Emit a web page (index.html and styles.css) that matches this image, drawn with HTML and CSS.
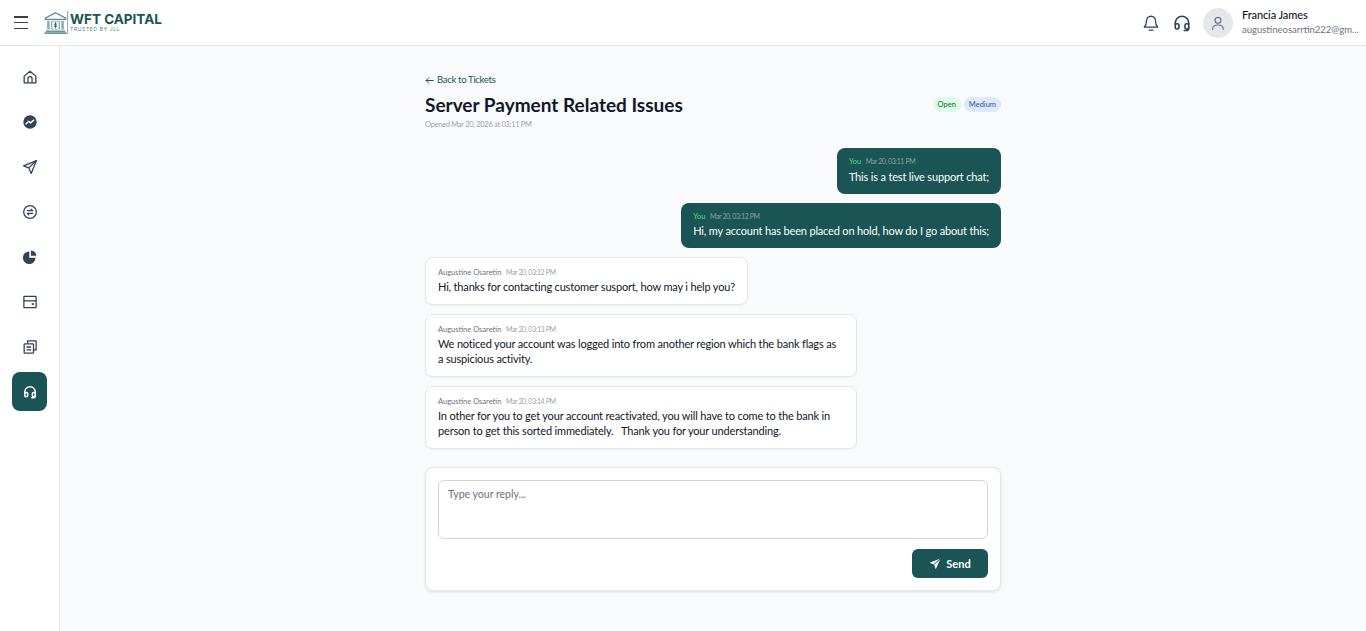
FILE: index.html
```html
<!DOCTYPE html>
<html lang="en">
<head>
<meta charset="utf-8">
<title>Server Payment Related Issues</title>
<link rel="stylesheet" href="styles.css">
</head>
<body>
<header class="topbar">
  <div class="brand-group">
    <button class="menu-btn" aria-label="Menu"><span></span><span></span><span></span></button>
    <div class="logo">
      <svg class="logo-mark" width="23" height="23" viewBox="0 0 26 26" fill="none"><path d="M1.500 8 13 2l11.500 6v1.500h-23z" fill="#fff" stroke="#5f8f8c" stroke-width="1.500"/><path d="M3.500 11h3v10h-3zM8 11h10v10H8zM19.500 11h3v10h-3z" fill="#8fb0ad"/><path d="M9.500 12h7v8h-7z" fill="#fff"/><path d="M13 12.500v7" stroke="#2f6662"/><path d="M11.500 14h3v1.500h-3zM11.500 16.500h3V18h-3z" fill="#2f6662"/><path d="M2 22h22v1.700H2zM.5 24h25v2H.5z" fill="#6c9794"/></svg>
      <div class="logo-rule"></div>
      <div class="logo-text">
        <div class="logo-name">WFT CAPITAL</div>
        <div class="logo-sub">TRUSTED BY JLL</div>
      </div>
    </div>
  </div>
  <div class="top-actions">
    <svg class="top-icon bell" width="18" height="18" viewBox="0 0 24 24" fill="none" stroke="#334155" stroke-width="1.700" stroke-linecap="round" stroke-linejoin="round"><path d="M6 9a6 6 0 0 1 12 0c0 5 1.500 7 3 8.500H3C4.500 16 6 14 6 9z"/><path d="M9.500 21.500h5"/></svg>
    <svg class="top-icon" width="18" height="18" viewBox="0 0 24 24" fill="none" stroke="#334155" stroke-width="2.200" stroke-linecap="round" stroke-linejoin="round"><path d="M3 14v-2a9 9 0 0 1 18 0v2"/><rect x="3" y="13" width="5" height="7" rx="2"/><rect x="16" y="13" width="5" height="7" rx="2"/><path d="M21 18v1a3 3 0 0 1-3 3h-3"/></svg>
    <div class="avatar">
      <svg width="16" height="16" viewBox="0 0 24 24" fill="none" stroke="#6b7280" stroke-width="1.800" stroke-linecap="round"><circle cx="12" cy="8" r="4.500"/><path d="M4 21.500c0-4.500 3.500-6.500 8-6.500s8 2 8 6.500"/></svg>
    </div>
    <div class="user">
      <div class="user-name">Francia James</div>
      <div class="user-mail">augustineosarrtin222@gm...</div>
    </div>
  </div>
</header>
<div class="shell">
  <nav class="sidebar">
    <a class="nav-item"><svg width="14" height="14" viewBox="0 0 24 24" fill="none" stroke="#334155" stroke-width="2.200" stroke-linejoin="round"><path d="M2 10.500 12 2l10 8.500V22H2z"/><path d="M8.500 22v-7a3.500 3.500 0 0 1 7 0v7"/></svg></a>
    <a class="nav-item"><svg width="14" height="14" viewBox="0 0 24 24"><circle cx="12" cy="12" r="11.500" fill="#334155"/><path d="M4.500 16 9.500 11l3.500 2.500L19 8" fill="none" stroke="#fff" stroke-width="2.500" stroke-linejoin="round"/></svg></a>
    <a class="nav-item"><svg width="14" height="14" viewBox="0 0 24 24" fill="none" stroke="#334155" stroke-width="2.200" stroke-linejoin="round"><path d="M23 1 1 10l9 3.500L14 23z"/><path d="M23 1 10 13.500"/></svg></a>
    <a class="nav-item"><svg width="14" height="14" viewBox="0 0 24 24" fill="none" stroke="#334155" stroke-width="2.200" stroke-linecap="round" stroke-linejoin="round"><circle cx="12" cy="12" r="10.800"/><path d="M7.500 9.500h9l-2.500-2.500M16.500 14.500h-9l2.500 2.500"/></svg></a>
    <a class="nav-item"><svg width="14" height="14" viewBox="0 0 24 24" fill="#334155"><path d="M10.800 2.500a10.800 10.800 0 1 0 10.700 10.700H10.800z"/><path d="M13.500 1v8.800h9.400A10 10 0 0 0 13.500 1z"/></svg></a>
    <a class="nav-item"><svg width="14" height="14" viewBox="0 0 24 24" fill="none" stroke="#334155" stroke-width="2.200"><rect x="1.500" y="2.500" width="21" height="19" rx="1"/><path d="M1.500 10h21"/><path d="M15 15.500h4" stroke-width="2.800"/></svg></a>
    <a class="nav-item"><svg width="14" height="14" viewBox="0 0 24 24" fill="none" stroke="#334155" stroke-width="2.200" stroke-linejoin="round"><path d="M8 6V1.500h14.500V17H18"/><rect x="2" y="6.500" width="16" height="16" rx="1"/><path d="M6 12h8M6 17h8"/></svg></a>
    <a class="nav-item active"><svg width="14" height="14" viewBox="0 0 24 24" fill="none" stroke="#fff" stroke-width="2.600" stroke-linecap="round" stroke-linejoin="round"><path d="M3 14v-2a9 9 0 0 1 18 0v2"/><rect x="3" y="13" width="5" height="7" rx="2"/><rect x="16" y="13" width="5" height="7" rx="2"/><path d="M21 18v1a3 3 0 0 1-3 3h-3"/></svg></a>
  </nav>
  <main class="main">
    <div class="column">
      <a class="back"><svg width="9" height="9" viewBox="0 0 12 12" fill="none" stroke="#1a5454" stroke-width="1.300" stroke-linecap="round" stroke-linejoin="round"><path d="M11 6H1.500M5 2.500 1.500 6 5 9.500"/></svg>Back to Tickets</a>
      <div class="ticket-head">
        <div>
          <h1 class="title">Server Payment Related Issues</h1>
          <div class="opened">Opened Mar 20, 2026 at 03:11 PM</div>
        </div>
        <div class="badges"><span class="badge badge-open">Open</span><span class="badge badge-medium">Medium</span></div>
      </div>
      <div class="thread">
        <div class="msg msg-out">
          <div class="meta"><span class="who">You</span><span class="when">Mar 20, 03:11 PM</span></div>
          <div class="body">This is a test live support chat;</div>
        </div>
        <div class="msg msg-out">
          <div class="meta"><span class="who">You</span><span class="when">Mar 20, 03:12 PM</span></div>
          <div class="body">Hi, my account has been placed on hold, how do I go about this;</div>
        </div>
        <div class="msg msg-in">
          <div class="meta"><span class="who">Augustine Osaretin</span><span class="when">Mar 20, 03:12 PM</span></div>
          <div class="body">Hi, thanks for contacting customer susport, how may i help you?</div>
        </div>
        <div class="msg msg-in msg-wide">
          <div class="meta"><span class="who">Augustine Osaretin</span><span class="when">Mar 20, 03:13 PM</span></div>
          <div class="body">We noticed your account was logged into from another region which the bank flags as a suspicious activity.</div>
        </div>
        <div class="msg msg-in msg-wide">
          <div class="meta"><span class="who">Augustine Osaretin</span><span class="when">Mar 20, 03:14 PM</span></div>
          <div class="body">In other for you to get your account reactivated, you will have to come to the bank in person to get this sorted immediately. &nbsp; Thank you for your understanding.</div>
        </div>
      </div>
      <form class="reply">
        <textarea class="reply-input" placeholder="Type your reply..."></textarea>
        <div class="reply-actions">
          <button class="send" type="button"><svg width="12" height="12" viewBox="0 0 24 24"><path d="M23 1 1 9.500l9 3.500 3.500 9.500z" fill="#fff"/><path d="M23 1 10 13" stroke="#1a5454" stroke-width="2"/></svg>Send</button>
        </div>
      </form>
    </div>
  </main>
</div>
</body>
</html>
```
FILE: styles.css
```css
* { box-sizing: border-box; }
html, body { height: 100%; }
body {
  margin: 0;
  background: #f9fafb;
  color: #111827;
  font-family: Lato, "Noto Sans", sans-serif;
  overflow: hidden;
}
.topbar {
  height: 46px;
  background: #fff;
  border-bottom: 1px solid #e5e7eb;
  display: flex;
  align-items: center;
  justify-content: space-between;
  padding: 0 12px 0 14px;
}
.brand-group { display: flex; align-items: center; gap: 16px; }
.menu-btn {
  width: 14px;
  height: 13px;
  padding: 0;
  border: 0;
  background: none;
  display: flex;
  flex-direction: column;
  justify-content: space-between;
}
.menu-btn span { display: block; height: 1.500px; background: #374151; }
.logo { display: flex; align-items: center; }
.logo-mark { display: block; }
.logo-rule { width: 1px; height: 23px; background: #8fb0ad; margin-right: 2px; }
.logo-text { display: flex; flex-direction: column; }
.logo-name {
  font-family: Inter, sans-serif;
  font-size: 13.500px;
  font-weight: 700;
  line-height: 14px;
  color: #1a5454;
}
.logo-sub {
  font-family: Inter, sans-serif;
  font-size: 5px;
  line-height: 7px;
  color: #4d7f7c;
  letter-spacing: .65px;
}
.top-actions { display: flex; align-items: center; }
.top-icon { display: block; margin-right: 12px; }
.bell { margin-right: 13px; }
.avatar {
  width: 30px;
  height: 30px;
  border-radius: 50%;
  background: #e5e7eb;
  display: flex;
  align-items: center;
  justify-content: center;
  margin-right: 9px;
}
.user { width: 112px; margin-top: -1px; }
.user-name { font-size: 11px; line-height: 14px; font-weight: 500; letter-spacing: -.1px; color: #111827; }
.user-mail { font-size: 9.500px; line-height: 14px; margin-top: 1px; color: #6b7280; white-space: nowrap; }
.shell { display: flex; height: calc(100% - 46px); }
.sidebar {
  width: 60px;
  background: #fff;
  border-right: 1px solid #e5e7eb;
  padding: 11px 12px;
  display: flex;
  flex-direction: column;
  gap: 6px;
  flex: none;
}
.nav-item {
  width: 35px;
  height: 39px;
  border-radius: 8px;
  display: flex;
  align-items: center;
  justify-content: center;
}
.nav-item.active { background: #1a5454; }
.main { flex: 1; display: flex; justify-content: center; padding-top: 27px; }
.column { width: 576px; }
.back {
  display: flex;
  align-items: center;
  gap: 3px;
  font-size: 9.500px;
  line-height: 14px;
  letter-spacing: -.3px;
  color: #1a5454;
}
.ticket-head {
  display: flex;
  justify-content: space-between;
  align-items: flex-start;
  margin-top: 5px;
}
.title { margin: 0; font-size: 19px; line-height: 26px; font-weight: 700; color: #111827; }
.opened { font-size: 7.500px; line-height: 12px; margin-top: 1px; letter-spacing: -.3px; color: #9ca3af; }
.badges { display: flex; gap: 3px; margin-top: 5px; }
.badge { font-size: 7.500px; line-height: 15px; padding: 0 5px; border-radius: 8px; }
.badge-open { background: #dcfce7; color: #166534; }
.badge-medium { background: #dbeafe; color: #3b4f8f; }
.thread { display: flex; flex-direction: column; gap: 9px; margin-top: 17px; }
.msg { border-radius: 8px; width: fit-content; max-width: 432px; }
.msg-out { align-self: flex-end; background: #1a5454; color: #fff; padding: 8px 12px 10px; }
.msg-in {
  align-self: flex-start;
  background: #fff;
  border: 1px solid #e5e7eb;
  box-shadow: 0 1px 2px rgba(0,0,0,.05);
  padding: 9px 12px 10px;
}
.msg-wide { width: 432px; padding-right: 16px; }
.meta { display: flex; align-items: center; gap: 4.500px; font-size: 7.500px; line-height: 11px; margin-bottom: 1px; }
.when { font-size: 7px; letter-spacing: -.4px; }
.msg-out .meta { margin-bottom: 1.500px; }
.msg-out .who { color: #4ade80; }
.msg-out .when { color: #82a5a5; }
.msg-in .who { color: #6b7280; }
.msg-in .when { color: #9ca3af; }
.body { font-size: 11px; line-height: 15px; letter-spacing: -.17px; }
.reply {
  margin-top: 18px;
  background: #fff;
  border: 1px solid #e5e7eb;
  border-radius: 8px;
  box-shadow: 0 1px 3px rgba(0,0,0,.1);
  padding: 12px;
}
.reply-input {
  display: block;
  width: 100%;
  height: 59px;
  border: 1px solid #d1d5db;
  border-radius: 6px;
  padding: 6px 9px;
  font: 10.500px/14px Lato, sans-serif;
  resize: none;
  background: #fff;
}
.reply-input::placeholder { color: #6b7280; }
.reply-actions { display: flex; justify-content: flex-end; margin-top: 10px; }
.send {
  width: 76px;
  height: 29px;
  border: 0;
  border-radius: 6px;
  background: #1a5454;
  color: #fff;
  font: 700 11px Lato, sans-serif;
  display: flex;
  align-items: center;
  justify-content: center;
  gap: 5px;
}
```
